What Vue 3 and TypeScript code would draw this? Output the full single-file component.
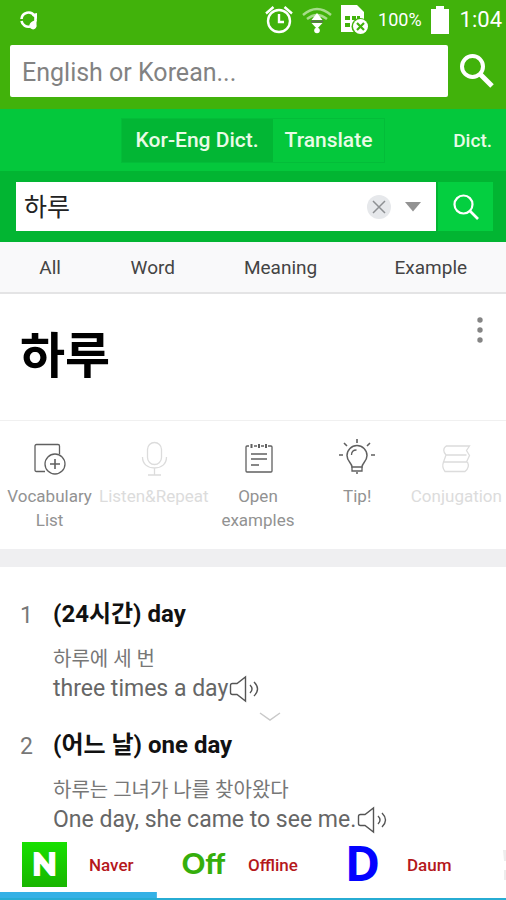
<script setup lang="ts">
import { ref } from 'vue'

interface Tool {
  id: string
  label: string
  disabled: boolean
}

interface Sense {
  title: string
  korean: string
  english: string
  more: boolean
}

const query = ref('')
const word = ref('하루')
const tabs: string[] = ['All', 'Word', 'Meaning', 'Example']
const tools: Tool[] = [
  { id: 'vocabulary', label: 'Vocabulary List', disabled: false },
  { id: 'listen', label: 'Listen&Repeat', disabled: true },
  { id: 'examples', label: 'Open examples', disabled: false },
  { id: 'tip', label: 'Tip!', disabled: false },
  { id: 'conjugation', label: 'Conjugation', disabled: true },
]
const senses: Sense[] = [
  { title: '(24시간) day', korean: '하루에 세 번', english: 'three times a day', more: true },
  { title: '(어느 날) one day', korean: '하루는 그녀가 나를 찾아왔다', english: 'One day, she came to see me.', more: false },
]
const sources = [
  { id: 'naver', mark: 'N', label: 'Naver' },
  { id: 'offline', mark: 'Off', label: 'Offline' },
  { id: 'daum', mark: 'D', label: 'Daum' },
]
</script>

<template>
  <div class="screen">
    <header class="app-header">
      <div class="status">
        <svg class="sync" width="18" height="18" viewBox="0 0 18 18" aria-hidden="true">
          <path d="M1.500 8A7 7 0 0 1 14.500 5M15.500 2.500v8M1.500 10A7 7 0 0 0 10 15.500" fill="none" stroke="#fff" stroke-width="2.600" />
          <path d="M12 4 17 2v6Z M16.500 9v4.500a3.700 3.700 0 1 1-6.500-1Q12 9.500 16.500 9Z" fill="#fff" />
        </svg>
        <svg width="28" height="30" viewBox="0 0 28 30" aria-hidden="true">
          <g fill="none" stroke="#fff" stroke-width="2.400">
            <circle cx="14" cy="16" r="11" />
            <path d="M14 9v8h5" />
            <path d="M1 8.500 8.500 2M27 8.500 19.500 2" />
          </g>
        </svg>
        <svg width="30" height="28" viewBox="0 0 30 28" aria-hidden="true">
          <g fill="none" stroke="#a6dc8b" stroke-width="2.400">
            <path d="M1 9Q15-3 29 9" />
            <path d="M5 13Q15 5 25 13" />
          </g>
          <path d="M15 7 20.500 14H9.500Z M9.500 17h11l-5.500 6Z" fill="#fff" />
          <path d="M9 15.500h12" stroke="#5c7054" stroke-width="2" />
          <circle cx="15" cy="24.500" r="2.800" fill="#fff" />
        </svg>
        <svg width="28" height="31" viewBox="0 0 28 31" aria-hidden="true">
          <path d="M0 1h16l7 7v20H0Z" fill="#fff" />
          <g fill="#41b20b">
            <path d="M4 12h5v4H4ZM11 12h4v4h-4ZM16 12h3v4h-3ZM4 19h5v4H4Z" />
            <circle cx="19" cy="22.500" r="8.500" />
          </g>
          <circle cx="19.500" cy="22.500" r="7.500" fill="#fff" />
          <path d="m16 19 7 7m0-7-7 7" stroke="#41b20b" stroke-width="2.200" />
        </svg>
        <span class="percent">100%</span>
        <svg class="battery" width="18" height="28" viewBox="0 0 18 28" aria-hidden="true">
          <path d="M5 0h8v3h5v25H0V3h5Z" fill="#fff" />
        </svg>
        <span class="clock">1:04</span>
      </div>
      <form class="app-search" @submit.prevent>
        <input v-model="query" type="text" placeholder="English or Korean..." aria-label="English or Korean" />
        <button type="submit" aria-label="Search">
          <svg width="34" height="34" viewBox="0 0 34 34" aria-hidden="true">
            <circle cx="12.500" cy="12.500" r="10.500" fill="none" stroke="#fff" stroke-width="4" />
            <path d="m20 20 12 12" stroke="#fff" stroke-width="5" />
          </svg>
        </button>
      </form>
    </header>

    <nav class="modes">
      <div class="toggle">
        <button type="button" class="active">Kor-Eng Dict.</button>
        <button type="button">Translate</button>
      </div>
      <a href="#dict">Dict.</a>
    </nav>

    <form class="dict-search" @submit.prevent>
      <div class="field">
        <input v-model="word" type="text" aria-label="Word" />
        <button type="button" class="clear" aria-label="Clear" @click="word = ''">
          <svg width="24" height="24" viewBox="0 0 24 24" aria-hidden="true">
            <circle cx="12" cy="12" r="12" fill="#e6e8eb" />
            <path d="m6 6 12 12m0-12L6 18" stroke="#8d9093" stroke-width="1.500" />
          </svg>
        </button>
        <button type="button" class="history" aria-label="History">
          <svg width="16" height="10" viewBox="0 0 16 10" aria-hidden="true">
            <path d="M0 0h16L8 9.500Z" fill="#929292" />
          </svg>
        </button>
      </div>
      <button type="submit" class="go" aria-label="Look up">
        <svg width="26" height="26" viewBox="0 0 26 26" aria-hidden="true">
          <circle cx="10.500" cy="10.500" r="9" fill="none" stroke="#fff" stroke-width="2.200" />
          <path d="m17 17 8 8" stroke="#fff" stroke-width="2.600" />
        </svg>
      </button>
    </form>

    <nav class="tabs">
      <a v-for="tab in tabs" :key="tab" :href="'#' + tab.toLowerCase()">{{ tab }}</a>
    </nav>

    <section class="headword">
      <h1>하루</h1>
      <button type="button" aria-label="More">
        <svg width="6" height="26" viewBox="0 0 6 26" aria-hidden="true">
          <g fill="#858585">
            <circle cx="3" cy="3" r="2.700" />
            <circle cx="3" cy="13" r="2.700" />
            <circle cx="3" cy="23" r="2.700" />
          </g>
        </svg>
      </button>
    </section>

    <section class="tools">
      <button v-for="tool in tools" :key="tool.id" type="button" :disabled="tool.disabled">
        <svg width="36" height="36" viewBox="0 0 36 36" fill="none" stroke="currentColor" stroke-width="1.300" aria-hidden="true">
          <template v-if="tool.id === 'vocabulary'">
            <path d="M13 31.500H4.500q-1.500 0-1.500-1.500V6q0-1.500 1.500-1.500H26q1.500 0 1.500 1.500v8" />
            <circle cx="23" cy="24" r="10" />
            <path d="M18 24h10M23 19v10" stroke-width="1.600" />
          </template>
          <template v-else-if="tool.id === 'listen'">
            <rect x="11.500" y="2.500" width="14" height="22" rx="7" />
            <path d="M6.500 17c0 7 5 11 12 11s12-4 12-11M18.500 28v7M12 35h13" />
          </template>
          <template v-else-if="tool.id === 'examples'">
            <path d="M9 6H7q-1 0-1 1v24q0 1 1 1h24q1 0 1-1V7q0-1-1-1h-3M14 6h3m4 0h3" />
            <path d="M11.500 4v4M19 4v4M26 4v4" stroke-width="2" />
            <path d="M11 14h16M11 19h16M11 25h8" stroke-width="1.500" />
          </template>
          <template v-else-if="tool.id === 'tip'">
            <path d="M13 27c0-4-5-5.500-5-11.500a10 10 0 0 1 20 0c0 6-5 7.500-5 11.500Z" stroke-width="1.500" />
            <path d="M12.500 15c0-3 2-5 5-5M13 27v4h10v-4M17 33h2" />
            <path d="M18-1v4M5 3l3 3M31 3l-3 3M0 15h4M32 15h4" stroke-width="1.600" />
          </template>
          <template v-else>
            <path d="M8 6h23.500l-3 4.500 3 5-3 6.500M8 6q-4.500 4 0 9h20.500M8 15l-2.500 7h24M5.500 22q-2 5 1.500 9.500h20q5-4 2.500-9.500" />
          </template>
        </svg>
        <span>{{ tool.label }}</span>
      </button>
    </section>

    <main>
      <ol>
        <li v-for="(sense, index) in senses" :key="sense.title">
          <span class="number">{{ index + 1 }}</span>
          <div class="sense">
            <h2>{{ sense.title }}</h2>
            <p class="korean">{{ sense.korean }}</p>
            <p class="english">
              <span>{{ sense.english }}</span>
              <button type="button" aria-label="Listen">
                <svg width="32" height="26" viewBox="0 0 32 26" fill="none" stroke="#555" stroke-width="1.400" aria-hidden="true">
                  <path d="M9 7.500H4.500q-2 0-2 2v7q0 2 2 2H9l8.500 6.500V1Z" />
                  <path d="M22 9q4 4 0 8M26 6q7 7 0 14" />
                </svg>
              </button>
            </p>
            <button v-if="sense.more" type="button" class="more" aria-label="More examples">
              <svg width="22" height="10" viewBox="0 0 22 10" aria-hidden="true">
                <path d="m1 1 10 7L21 1" fill="none" stroke="#c9c9c9" stroke-width="1.500" />
              </svg>
            </button>
          </div>
        </li>
      </ol>
    </main>

    <footer>
      <nav class="sources">
        <a v-for="source in sources" :key="source.id" :href="'#' + source.id">
          <span class="mark" :class="source.id">{{ source.mark }}</span>
          <span>{{ source.label }}</span>
        </a>
        <a href="#next" aria-label="Next source">
          <svg width="45" height="45" viewBox="0 0 45 45" aria-hidden="true">
            <path d="M4 8h37v30H5V28h3v-9H5Z" fill="#ededed" />
          </svg>
        </a>
      </nav>
      <div class="indicator"></div>
    </footer>
  </div>
</template>

<style>
body {
  background: #fff;
}
</style>

<style scoped>
.screen {
  display: flex;
  flex-direction: column;
  height: 100vh;
  overflow: hidden;
  font-family: Roboto, "Noto Sans CJK KR", sans-serif;
  color: #333;
}

.screen * {
  box-sizing: border-box;
}

.screen > * {
  flex-shrink: 0;
}

button,
input {
  margin: 0;
  padding: 0;
  border: 0;
  background: none;
  font: inherit;
  color: inherit;
}

input {
  outline: 0;
}

a {
  color: inherit;
  text-decoration: none;
}

svg {
  display: block;
  overflow: visible;
}

.app-header {
  padding-bottom: 12px;
  background: #41b20b;
  color: #fff;
}

.status {
  display: flex;
  align-items: center;
  gap: 9px;
  height: 39px;
  padding: 0 4px 0 20px;
}

.sync {
  margin-right: auto;
}

.percent {
  font-size: 18px;
}

.battery {
  margin-right: 2px;
}

.clock {
  font-size: 22px;
}

.app-search {
  display: flex;
  align-items: center;
  gap: 12px;
  padding: 6px 12px 0 10px;
}

.app-search input {
  flex: 1;
  min-width: 0;
  height: 52px;
  padding: 2px 12px 0;
  border-radius: 2px;
  background: #fff;
  color: #333;
  font-size: 25px;
}

.app-search input::placeholder {
  color: #828282;
  opacity: 1;
}

.modes {
  display: grid;
  grid-template-columns: 1fr auto 1fr;
  align-items: center;
  height: 62px;
  padding: 0 14px;
  background: #04c83c;
  color: #e9fbe6;
}

.toggle {
  display: flex;
  grid-column: 2;
  height: 45px;
  border: 1px solid #03bd39;
  font-size: 21px;
  font-weight: 500;
}

.toggle button {
  padding: 0 12px;
}

.toggle .active {
  padding: 0 14px;
  background: #02b634;
}

.modes a {
  justify-self: end;
  font-size: 19px;
  font-weight: 500;
}

.dict-search {
  display: flex;
  gap: 2px;
  height: 71px;
  padding: 11px 13px 11px 16px;
  background: #02b532;
}

.field {
  display: flex;
  flex: 1;
  align-items: center;
  min-width: 0;
  padding: 0 15px 0 8px;
  background: #fff;
}

.field input {
  flex: 1;
  min-width: 0;
  padding-top: 2px;
  color: #222;
  font-size: 25px;
  line-height: 36px;
}

.history {
  margin-left: 14px;
}

.go {
  display: grid;
  place-items: center;
  width: 55px;
  background: #04cf40;
}

.tabs {
  display: grid;
  grid-template-columns: 20fr 21fr 30fr 30fr;
  align-items: center;
  height: 52px;
  border-bottom: 2px solid #e4e4e5;
  background: #f9f9fa;
  color: #444;
  font-size: 19px;
  text-align: center;
}

.headword {
  display: flex;
  justify-content: space-between;
  align-items: flex-start;
  height: 127px;
  padding: 23px 23px 0 20px;
  border-bottom: 1px solid #f0f0f0;
}

h1 {
  margin: 0;
  color: #000;
  font-size: 49px;
  font-weight: 700;
  line-height: 80px;
}

.tools {
  display: grid;
  grid-template-columns: 10fr 11fr 10fr 10fr 10fr;
  height: 146px;
  padding-top: 19px;
  border-bottom: 18px solid #efeff1;
}

.tools button {
  display: flex;
  flex-direction: column;
  align-items: center;
  gap: 8px;
  min-width: 0;
  color: #606060;
  font-size: 17px;
  line-height: 24px;
}

.tools span {
  color: #929292;
}

.tools button:disabled,
.tools button:disabled span {
  color: #dcdcdc;
}

main {
  flex: 1 1 0;
  min-height: 0;
  overflow: hidden;
}

ol {
  display: grid;
  gap: 8px;
  margin: 0;
  padding: 29px 20px 0;
  list-style: none;
}

li {
  display: grid;
  grid-template-columns: 33px 1fr;
}

.number {
  color: #777;
  font-size: 23px;
  line-height: 40px;
}

h2 {
  margin: 0 0 12px;
  color: #111;
  font-size: 24px;
  font-weight: 700;
  line-height: 36px;
}

p {
  margin: 0;
}

.korean {
  color: #777;
  font-size: 20px;
  line-height: 30px;
}

.english {
  display: flex;
  align-items: center;
  color: #666;
  font-size: 23px;
  line-height: 30px;
}

.more {
  display: block;
  height: 15px;
  margin: 0 auto;
  padding-top: 8px;
}

footer {
  background: #fff;
}

.sources {
  display: flex;
  overflow: hidden;
  padding: 3px 0 5px;
}

.sources a {
  display: flex;
  flex: 0 0 159px;
  align-items: center;
  gap: 22px;
  height: 45px;
  padding-left: 22px;
  color: #b5181c;
  font-size: 17px;
  font-weight: 500;
}

.mark {
  display: flex;
  flex: 0 0 45px;
  align-items: center;
  justify-content: center;
  height: 45px;
  padding-bottom: 4px;
  line-height: 40px;
}

.naver {
  background: linear-gradient(#17e000, #18b500);
  color: #fff;
  font-family: Lato, sans-serif;
  font-size: 31px;
  font-weight: 900;
  -webkit-text-stroke: 2px #fff;
}

.offline {
  color: #35ae0c;
  font-family: Lato, sans-serif;
  font-size: 29px;
  font-weight: 900;
}

.daum {
  color: #0303ff;
  font-family: "Open Sans", sans-serif;
  font-size: 48px;
  font-weight: 700;
}

.indicator {
  height: 8px;
  border-bottom: 2px solid #27acd3;
  background: linear-gradient(#34b1e6, #34b1e6) left / 31% 100% no-repeat;
}
</style>
